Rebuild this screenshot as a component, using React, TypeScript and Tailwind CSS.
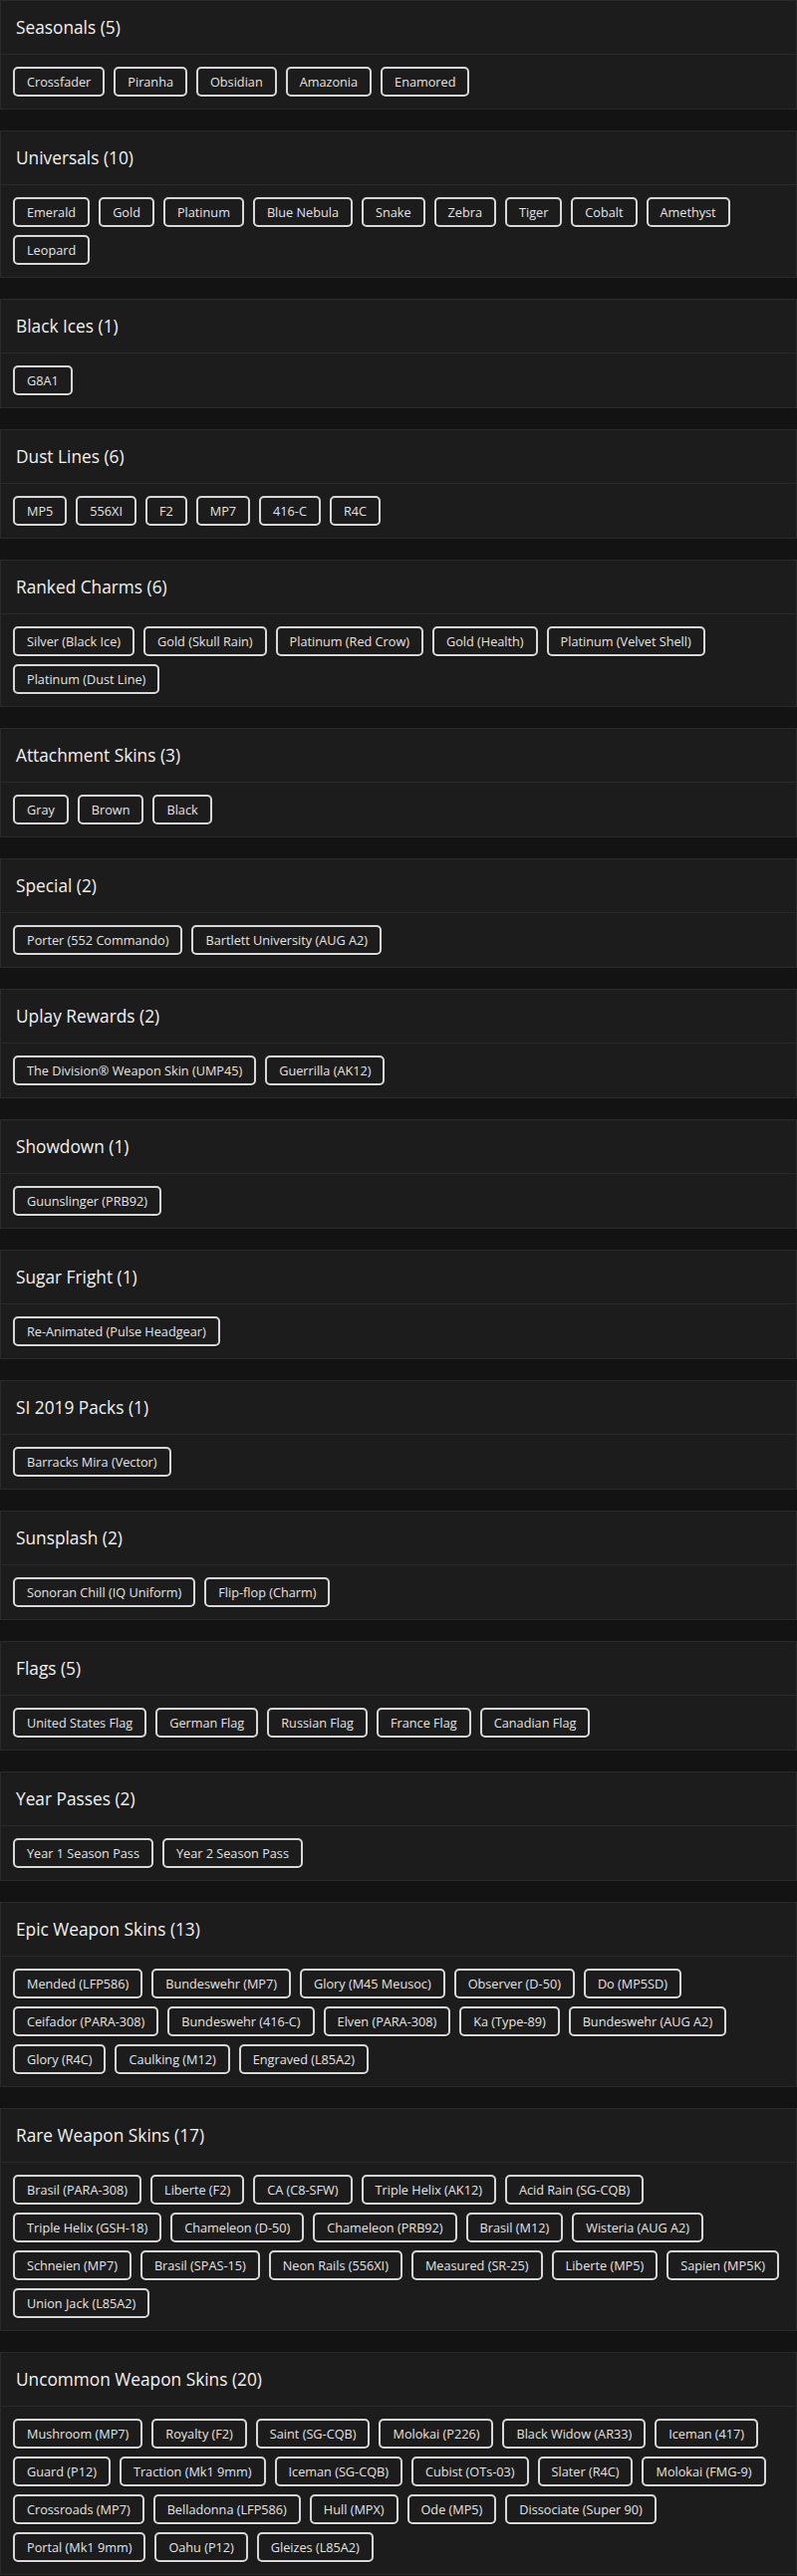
const sections: { title: string; items: string[] }[] = [
  { title: "Seasonals", items: ["Crossfader", "Piranha", "Obsidian", "Amazonia", "Enamored"] },
  {
    title: "Universals",
    items: ["Emerald", "Gold", "Platinum", "Blue Nebula", "Snake", "Zebra", "Tiger", "Cobalt", "Amethyst", "Leopard"],
  },
  { title: "Black Ices", items: ["G8A1"] },
  { title: "Dust Lines", items: ["MP5", "556XI", "F2", "MP7", "416-C", "R4C"] },
  {
    title: "Ranked Charms",
    items: [
      "Silver (Black Ice)",
      "Gold (Skull Rain)",
      "Platinum (Red Crow)",
      "Gold (Health)",
      "Platinum (Velvet Shell)",
      "Platinum (Dust Line)",
    ],
  },
  { title: "Attachment Skins", items: ["Gray", "Brown", "Black"] },
  { title: "Special", items: ["Porter (552 Commando)", "Bartlett University (AUG A2)"] },
  { title: "Uplay Rewards", items: ["The Division® Weapon Skin (UMP45)", "Guerrilla (AK12)"] },
  { title: "Showdown", items: ["Guunslinger (PRB92)"] },
  { title: "Sugar Fright", items: ["Re-Animated (Pulse Headgear)"] },
  { title: "SI 2019 Packs", items: ["Barracks Mira (Vector)"] },
  { title: "Sunsplash", items: ["Sonoran Chill (IQ Uniform)", "Flip-flop (Charm)"] },
  {
    title: "Flags",
    items: ["United States Flag", "German Flag", "Russian Flag", "France Flag", "Canadian Flag"],
  },
  { title: "Year Passes", items: ["Year 1 Season Pass", "Year 2 Season Pass"] },
  {
    title: "Epic Weapon Skins",
    items: [
      "Mended (LFP586)",
      "Bundeswehr (MP7)",
      "Glory (M45 Meusoc)",
      "Observer (D-50)",
      "Do (MP5SD)",
      "Ceifador (PARA-308)",
      "Bundeswehr (416-C)",
      "Elven (PARA-308)",
      "Ka (Type-89)",
      "Bundeswehr (AUG A2)",
      "Glory (R4C)",
      "Caulking (M12)",
      "Engraved (L85A2)",
    ],
  },
  {
    title: "Rare Weapon Skins",
    items: [
      "Brasil (PARA-308)",
      "Liberte (F2)",
      "CA (C8-SFW)",
      "Triple Helix (AK12)",
      "Acid Rain (SG-CQB)",
      "Triple Helix (GSH-18)",
      "Chameleon (D-50)",
      "Chameleon (PRB92)",
      "Brasil (M12)",
      "Wisteria (AUG A2)",
      "Schneien (MP7)",
      "Brasil (SPAS-15)",
      "Neon Rails (556XI)",
      "Measured (SR-25)",
      "Liberte (MP5)",
      "Sapien (MP5K)",
      "Union Jack (L85A2)",
    ],
  },
  {
    title: "Uncommon Weapon Skins",
    items: [
      "Mushroom (MP7)",
      "Royalty (F2)",
      "Saint (SG-CQB)",
      "Molokai (P226)",
      "Black Widow (AR33)",
      "Iceman (417)",
      "Guard (P12)",
      "Traction (Mk1 9mm)",
      "Iceman (SG-CQB)",
      "Cubist (OTs-03)",
      "Slater (R4C)",
      "Molokai (FMG-9)",
      "Crossroads (MP7)",
      "Belladonna (LFP586)",
      "Hull (MPX)",
      "Ode (MP5)",
      "Dissociate (Super 90)",
      "Portal (Mk1 9mm)",
      "Oahu (P12)",
      "Gleizes (L85A2)",
    ],
  },
];

function Section({ title, items }: { title: string; items: string[] }) {
  return (
    <div className="border border-[#2a2a2a] bg-[#1c1c1c]">
      {/* Header */}
      <div className="flex h-[54px] items-center border-b border-[#2a2a2a] px-[15px]">
        <h2 className="text-[17.3px] leading-6 font-medium text-[#f2f2f2]">
          {title} ({items.length})
        </h2>
      </div>

      {/* Items */}
      <div className="flex flex-wrap gap-x-[9px] gap-y-2 py-3 pl-3 pr-[10px]">
        {items.map((item) => (
          <button
            key={item}
            className="flex h-[30px] items-center rounded-[5px] border-2 border-[#d8d8d8] bg-[#1c1c1c] px-3 text-[12.7px] leading-4 text-[#e4e4e4] shadow-[0_1px_0_rgba(0,0,0,0.4)]"
          >
            {item}
          </button>
        ))}
      </div>
    </div>
  );
}

export default function App() {
  return (
    <div
      className="flex min-h-screen w-[800px] flex-col gap-[21px] bg-[#131313]"
      style={{ fontFamily: '"Open Sans", "Liberation Sans", sans-serif' }}
    >
      {sections.map((s) => (
        <Section key={s.title} title={s.title} items={s.items} />
      ))}
    </div>
  );
}
